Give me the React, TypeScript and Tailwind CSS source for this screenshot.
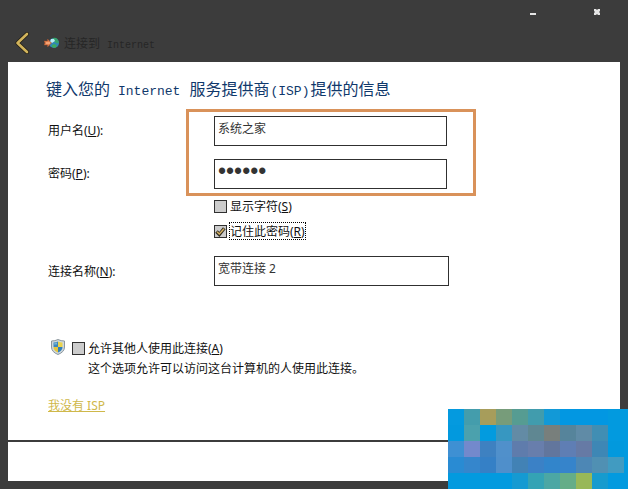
import { useState } from "react";
import type { ReactNode } from "react";

const fieldClass =
  "block h-[30px] rounded-none border border-[#303030] bg-white px-[3px] text-[#333] outline-none";

const mosaic: string[][] = [
  ["#049adf", "#449dac", "#a79d5b", "#779c7a", "#569c92", "#419cad", "#1299d7", "#0297e2", "#0297e2", "#0297e2", "#029adf", "#029adf"],
  ["#0299de", "#4ba1ad", "#029bdf", "#3797c1", "#638ba5", "#5f8792", "#787f7c", "#56849b", "#608ba6", "#418eb3", "#029adf", "#029adf"],
  ["#3e90d3", "#7389cc", "#3e81c1", "#5090cb", "#5f7cac", "#687eac", "#62769d", "#5f7eb4", "#667aa5", "#3e87b5", "#0299dd", "#029adf"],
  ["#298bd3", "#3586cc", "#3580c6", "#4f8fcb", "#4282b5", "#3b81c6", "#3285cb", "#3684cb", "#4d87b5", "#5090b3", "#419bc1", "#029adf"],
  ["#029adf", "#029adf", "#029adf", "#029adf", "#159ad2", "#34a3b5", "#4ca7a4", "#65ad88", "#98b858", "#169bce", "#029adf", "#029adf"],
];

function Globe() {
  return (
    <svg className="h-3 w-4 shrink-0" viewBox="0 0 16 12" aria-hidden="true">
      <circle cx="10" cy="6" r="5" fill="#3187b5" />
      <path d="M9 1q5-1 6 5-3 1-4-1Q7 5 9 1" fill="#36a36d" />
      <path d="M8 8l3-1 2 2-2 2-3-1" fill="#3dab5d" />
      <path d="M7 2l3 0 1 2-3 2-2-1" fill="#b9ecf6" />
      <path d="M0 4h3.500V2L7.500 6l-4 4V8H0l1-2z" fill="#e5824f" stroke="#9a4a2b" strokeWidth=".5" />
      <path d="M2 6h4" stroke="#ffc49b" />
    </svg>
  );
}

function Shield() {
  return (
    <svg className="h-4 w-4 shrink-0" viewBox="0 0 16 16" aria-hidden="true">
      <path d="M8 .5Q11 2 14.500 2v6q0 5-6.500 7.500Q1.500 13 1.500 8V2Q5 2 8 .5" fill="#cfd8dd" stroke="#8b969d" />
      <path d="M8 2.500v5.500H3.500V3.500Q6 3.500 8 2.500" fill="#3b86bd" />
      <path d="M8 2.500q2 1 4.500 1V8H8z" fill="#ead34c" />
      <path d="M3.500 8H8v5.500Q3.500 11.500 3.500 8" fill="#e5c53d" />
      <path d="M8 8h4.500q0 3.500-4.500 5.500z" fill="#327eb9" />
      <path d="M4 4.500l3-1v2H4" fill="#79b5d8" />
    </svg>
  );
}

function Tick({ label, focused, initial }: { label: ReactNode; focused?: boolean; initial?: boolean }) {
  const [on, setOn] = useState(Boolean(initial));
  return (
    <label className="flex h-[18px] w-fit items-center gap-0.5">
      <span className="grid shrink-0">
        <input
          type="checkbox"
          checked={on}
          onChange={(e) => setOn(e.target.checked)}
          className="col-start-1 row-start-1 h-[13px] w-[13px] appearance-none border border-[#303030] bg-[#cccccc]"
        />
        {on && (
          <svg className="pointer-events-none col-start-1 row-start-1 h-[13px] w-[13px]" viewBox="0 0 13 13" fill="none" aria-hidden="true">
            <path d="M2.5 6.5 5.3 9.5 10.3 3.2" stroke="#302c20" strokeWidth="3.4" />
            <path d="M3 6.8 5.3 9 10 3.7" stroke="#d8b365" strokeWidth="1.4" />
          </svg>
        )}
      </span>
      <span
        className={
          focused
            ? "flex h-[18px] items-center px-px pt-0.5 outline-1 outline-dotted -outline-offset-1 outline-black"
            : "flex h-[18px] items-center px-px pt-0.5"
        }
      >
        <span>{label}</span>
      </span>
    </label>
  );
}

export default function App() {
  return (
    <div className="relative flex min-h-screen flex-col bg-[#3c3c3c] px-2 pb-2 font-['Noto_Sans','Noto_Sans_CJK_SC',sans-serif] text-xs text-[#111]">
      <header className="h-[62px]">
        <div className="flex h-6 justify-end gap-14 pr-[19px]">
          <button type="button" aria-label="最小化" className="flex w-2 items-center justify-center">
            <svg className="h-2 w-2" viewBox="0 0 8 8" aria-hidden="true"><path d="M1 5h6v2H1z" fill="#e5e5e5" /></svg>
          </button>
          <button type="button" aria-label="关闭" className="flex w-2 items-center justify-center">
            <svg className="h-2 w-2" viewBox="0 0 8 8" aria-hidden="true"><path d="M1 1h2l1 1 1-1h2v2L6 4l1 1v2H5L4 6 3 7H1V5l1-1-1-1z" fill="#e5e5e5" /></svg>
          </button>
        </div>
        <div className="flex h-[38px] items-center gap-3.5 pl-1.5">
          <button type="button" aria-label="返回" className="shrink-0">
            <svg className="h-[22px] w-4" viewBox="0 0 16 22" fill="none" strokeLinecap="round" strokeLinejoin="round" aria-hidden="true">
              <path d="M13 2 3.500 11l9.500 9" stroke="#201c12" strokeWidth="4" />
              <path d="M13 2 3.500 11l9.500 9" stroke="#d2b45c" strokeWidth="2.6" />
            </svg>
          </button>
          <div className="flex items-center gap-1 text-[#262626]">
            <Globe />
            <h1 className="flex items-baseline gap-[7px] pt-0.5">
              <span>连接到</span>
              <span className="font-['Liberation_Mono',monospace] text-[10px]">Internet</span>
            </h1>
          </div>
        </div>
      </header>

      <main className="flex flex-1 flex-col bg-white">
        <form className="flex-1 pl-10" onSubmit={(e) => e.preventDefault()}>
          <h2 className="-ml-0.5 flex h-[54px] items-baseline gap-2 text-base leading-[54px] text-[#10386b]">
            <span>键入您的</span>
            <span className="font-['Liberation_Mono',monospace] text-[13px]">Internet</span>
            <span className="pl-px">
              服务提供商<span className="px-px font-['Liberation_Mono',monospace] text-[13px]">(ISP)</span>提供的信息
            </span>
          </h2>

          <div className="relative grid w-[399px] grid-cols-[166px_233px] items-center gap-y-[13px]">
            <label htmlFor="user">用户名(<u>U</u>):</label>
            <input id="user" defaultValue="系统之家" className={fieldClass + " pb-1.5"} />
            <label htmlFor="pass">密码(<u>P</u>):</label>
            <input
              id="pass"
              type="password"
              defaultValue="123456"
              className={fieldClass + " pb-1.5 font-['Liberation_Sans',sans-serif] text-[23px]"}
            />
            <div className="pointer-events-none absolute -top-[7px] -right-[29px] -bottom-[7px] w-[290px] border-3 border-[#d9925a]" />
          </div>

          <div className="mt-2 flex flex-col gap-[7px] pl-[166px]">
            <Tick label={<>显示字符(<u>S</u>)</>} />
            <Tick label={<>记住此密码(<u>R</u>)</>} focused initial />
          </div>

          <div className="mt-4 grid grid-cols-[166px_235px] items-center">
            <label htmlFor="name" className="pt-0.5">连接名称(<u>N</u>):</label>
            <input id="name" defaultValue="宽带连接 2" className={fieldClass + " pb-1.5"} />
          </div>

          <div className="mt-[53px] flex gap-1.5 pl-0.5">
            <Shield />
            <div>
              <Tick label={<>允许其他人使用此连接(<u>A</u>)</>} />
              <p className="mt-0.5 pl-4 leading-5">这个选项允许可以访问这台计算机的人使用此连接。</p>
            </div>
          </div>

          <a href="#" className="mt-[19px] inline-block text-[#cfb84a] underline">我没有 ISP</a>
        </form>
        <footer className="h-[41px] border-t-2 border-[#3c3c3c]" />
      </main>

      <div className="absolute right-0 bottom-0 grid h-20 w-[180px] grid-cols-[repeat(11,16px)_4px] grid-rows-5" aria-hidden="true">
        {mosaic.flat().map((color, i) => (
          <span key={i} style={{ backgroundColor: color }} />
        ))}
      </div>
    </div>
  );
}
